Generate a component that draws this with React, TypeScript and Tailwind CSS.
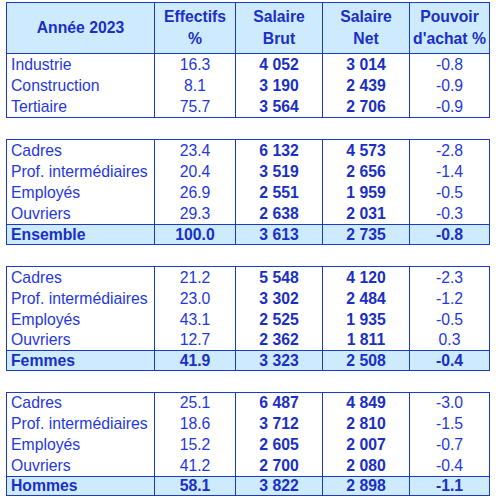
import React from "react";

type Row = { label: string; eff: string; brut: string; net: string; pouv: string; h: number };
type Block = { rows: Row[]; total?: Row };

const cols = "grid grid-cols-[147px_81px_87px_87px_80px]";

const blocks: Block[] = [
  {
    rows: [
      { label: "Industrie", eff: "16.3", brut: "4 052", net: "3 014", pouv: "-0.8", h: 21 },
      { label: "Construction", eff: "8.1", brut: "3 190", net: "2 439", pouv: "-0.9", h: 21 },
      { label: "Tertiaire", eff: "75.7", brut: "3 564", net: "2 706", pouv: "-0.9", h: 21 },
    ],
  },
  {
    rows: [
      { label: "Cadres", eff: "23.4", brut: "6 132", net: "4 573", pouv: "-2.8", h: 21 },
      { label: "Prof. intermédiaires", eff: "20.4", brut: "3 519", net: "2 656", pouv: "-1.4", h: 21 },
      { label: "Employés", eff: "26.9", brut: "2 551", net: "1 959", pouv: "-0.5", h: 21 },
      { label: "Ouvriers", eff: "29.3", brut: "2 638", net: "2 031", pouv: "-0.3", h: 21 },
    ],
    total: { label: "Ensemble", eff: "100.0", brut: "3 613", net: "2 735", pouv: "-0.8", h: 20 },
  },
  {
    rows: [
      { label: "Cadres", eff: "21.2", brut: "5 548", net: "4 120", pouv: "-2.3", h: 21 },
      { label: "Prof. intermédiaires", eff: "23.0", brut: "3 302", net: "2 484", pouv: "-1.2", h: 21 },
      { label: "Employés", eff: "43.1", brut: "2 525", net: "1 935", pouv: "-0.5", h: 21 },
      { label: "Ouvriers", eff: "12.7", brut: "2 362", net: "1 811", pouv: "0.3", h: 20 },
    ],
    total: { label: "Femmes", eff: "41.9", brut: "3 323", net: "2 508", pouv: "-0.4", h: 20 },
  },
  {
    rows: [
      { label: "Cadres", eff: "25.1", brut: "6 487", net: "4 849", pouv: "-3.0", h: 20 },
      { label: "Prof. intermédiaires", eff: "18.6", brut: "3 712", net: "2 810", pouv: "-1.5", h: 21 },
      { label: "Employés", eff: "15.2", brut: "2 605", net: "2 007", pouv: "-0.7", h: 21 },
      { label: "Ouvriers", eff: "41.2", brut: "2 700", net: "2 080", pouv: "-0.4", h: 21 },
    ],
    total: { label: "Hommes", eff: "58.1", brut: "3 822", net: "2 898", pouv: "-1.1", h: 19 },
  },
];

const cell = "flex items-center justify-center border-l border-[#1a3acb]";

function DataRow({ r, total }: { r: Row; total?: boolean }) {
  return (
    <div
      className={`${cols} ${total ? "border-t border-[#1a3acb] bg-[#cdeaff] font-bold text-[#1a2fc4]" : ""}`}
      style={{ height: r.h }}
    >
      <div className="flex items-center pl-[4px]">{r.label}</div>
      <div className={cell}>{r.eff}</div>
      <div className={`${cell} font-bold text-[#1a2fc4]`}>{r.brut}</div>
      <div className={`${cell} font-bold text-[#1a2fc4]`}>{r.net}</div>
      <div className={cell}>{r.pouv}</div>
    </div>
  );
}

export default function App() {
  return (
    <div className="w-[500px] h-[500px] bg-white pt-[2px] pl-[6px] text-[15.75px] leading-none text-[#1f38e0] font-['Liberation_Sans',Arial,sans-serif]">
      <div className="flex w-[484px] flex-col gap-[21px]">
        {blocks.map((b, i) => (
          <div key={i} className="border border-[#1a3acb]">
            {i === 0 && (
              <div className={`${cols} h-[51px] border-b border-[#1a3acb] bg-[#cdeaff] font-bold text-[#1a2fc4] leading-[22px]`}>
                <div className="flex items-center justify-center">Année 2023</div>
                <div className={`${cell} flex-col text-center`}>
                  <span>Effectifs</span>
                  <span>%</span>
                </div>
                <div className={`${cell} flex-col text-center`}>
                  <span>Salaire</span>
                  <span>Brut</span>
                </div>
                <div className={`${cell} flex-col text-center`}>
                  <span>Salaire</span>
                  <span>Net</span>
                </div>
                <div className={`${cell} flex-col text-center`}>
                  <span>Pouvoir</span>
                  <span>d'achat %</span>
                </div>
              </div>
            )}
            {b.rows.map((r, j) => (
              <DataRow key={j} r={r} />
            ))}
            {b.total && <DataRow r={b.total} total />}
          </div>
        ))}
      </div>
    </div>
  );
}
